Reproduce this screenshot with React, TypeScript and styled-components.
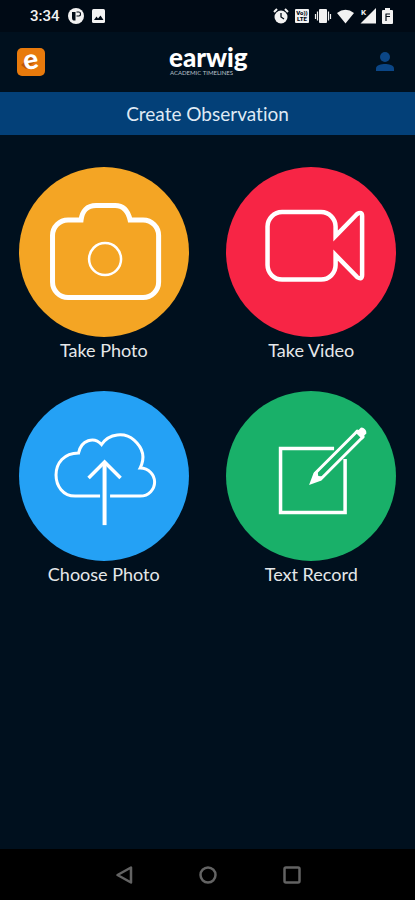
import React from "react";
import styled, { createGlobalStyle } from "styled-components";

const GlobalStyle = createGlobalStyle`
  *, *::before, *::after { box-sizing: border-box; }
  body { margin: 0; background: #00101e; }
  button { border: 0; padding: 0; background: none; color: inherit; font: inherit; cursor: pointer; }
  svg { display: block; overflow: visible; }
`;

const Screen = styled.div`
  min-height: 100vh;
  display: flex;
  flex-direction: column;
  background: #00101e;
  color: #e6e8ea;
  font-family: Lato, "Liberation Sans", sans-serif;
  font-variant-ligatures: none;
`;

const StatusBar = styled.div`
  height: 32px;
  padding: 0 22px 0 30px;
  display: flex;
  align-items: center;
  justify-content: space-between;
  background: #000a15;
  color: #f2f2f2;
`;

const StatusGroup = styled.div<{ $gap: number }>`
  display: flex;
  align-items: center;
  gap: ${(p) => p.$gap}px;
`;

const Clock = styled.time`
  font: 500 15px/20px Roboto, sans-serif;
`;

const Header = styled.header`
  height: 60px;
  padding: 0 18px 0 17px;
  display: grid;
  grid-template-columns: 1fr auto 1fr;
  align-items: center;
`;

const AppButton = styled.button`
  width: 28px;
  height: 28px;
`;

const AccountButton = styled.button`
  justify-self: end;
  color: #0b4686;
`;

const Banner = styled.h1`
  margin: 0;
  height: 43px;
  display: flex;
  align-items: center;
  justify-content: center;
  background: #034078;
  color: #dfe9f4;
  font-size: 19px;
  line-height: 24px;
  font-weight: 400;
`;

const Actions = styled.main`
  flex: 1;
  padding-top: 32px;
  display: grid;
  grid-template-columns: 1fr 1fr;
  align-content: start;
  row-gap: 28px;
`;

const Action = styled.button`
  display: flex;
  flex-direction: column;
  align-items: center;
`;

const Disc = styled.span<{ $color: string }>`
  width: 82%;
  aspect-ratio: 1;
  border-radius: 50%;
  background: ${(p) => p.$color};
  color: #fff;
  svg { width: 100%; height: 100%; }
`;

const Label = styled.span`
  font-size: 18px;
  line-height: 26px;
`;

const NavBar = styled.nav`
  height: 51px;
  display: flex;
  align-items: center;
  justify-content: center;
  gap: 64px;
  background: #000;
  color: #636363;
`;

const NavButton = styled.button`
  width: 20px;
  height: 20px;
`;

const CameraArt = () => (
  <svg viewBox="0 0 170 170" fill="none" stroke="currentColor" aria-hidden="true">
    <path
      strokeWidth="5"
      d="M49 53H62C63 44 68 38.500 77 38.500H96C105 38.500 109 44 111 53H124A15.500 15.500 0 0 1 139.500 68.500V115A15.500 15.500 0 0 1 124 130.500H49A15.500 15.500 0 0 1 33.500 115V68.500A15.500 15.500 0 0 1 49 53Z"
    />
    <circle cx="86" cy="92" r="16" strokeWidth="2.500" />
  </svg>
);

const VideoArt = () => (
  <svg viewBox="0 0 170 170" fill="none" stroke="currentColor" aria-hidden="true">
    <path
      strokeWidth="4.500"
      strokeMiterlimit="6"
      d="M56 45H95A14.500 14.500 0 0 1 109.500 59.500V69L131 47Q136 44 136 49V108Q136 113 131 110L109.500 88V98A14.500 14.500 0 0 1 95 112.500H56A14.500 14.500 0 0 1 41.500 98V59.500A14.500 14.500 0 0 1 56 45Z"
    />
  </svg>
);

const CloudArt = () => (
  <svg viewBox="0 0 170 170" fill="none" stroke="currentColor" aria-hidden="true">
    <path
      strokeWidth="3"
      d="M81 105H56C44 105 37 95 37 84C37 72 45 62 59.500 62C62 49 75 45 82.500 53.500C90 42 106 41 115 49C124 57 126 67 121 77C130 77 135.500 84 135.500 91C135.500 98 130 105 121 105H91"
    />
    <path strokeWidth="4" d="M85.500 134V71" />
    <path strokeWidth="3.500" d="M69.500 87L85.500 71L101.500 87" />
  </svg>
);

const RecordArt = () => (
  <svg viewBox="0 0 170 170" fill="none" stroke="currentColor" aria-hidden="true">
    <path strokeWidth="3.500" d="M108 57.500H54.500V121.500H119V68" />
    <g transform="translate(83 94) rotate(-45)">
      <path strokeWidth="3" strokeLinejoin="round" d="M13 -4H72V4H13L9 0Z" />
      <path fill="currentColor" stroke="none" d="M0 0L12 -5.500L16 -4L13 0L16 4L12 5.500Z" />
      <path fill="currentColor" stroke="none" d="M70 -5.500H73L74 -4H77Q79 -3 79 0Q79 3 77 4H74L73 5.500H70Z" />
    </g>
  </svg>
);

const actions = [
  { label: "Take Photo", color: "#f4a524", Art: CameraArt },
  { label: "Take Video", color: "#f72545", Art: VideoArt },
  { label: "Choose Photo", color: "#24a1f5", Art: CloudArt },
  { label: "Text Record", color: "#19b069", Art: RecordArt },
];

const brandFont = 'Lato, "Liberation Sans", sans-serif';

const Wordmark = () => (
  <svg width="76" height="34" viewBox="0 0 76 34" fill="#fff" role="img" aria-label="earwig academic timelines">
    <text x="0" y="22" fontFamily={brandFont} fontWeight="900" fontSize="26">earwig</text>
    <text x="1" y="30" fontFamily={brandFont} fontSize="6" fill="#b9c0c8">ACADEMIC TIMELINES</text>
  </svg>
);

const AppIcon = () => (
  <svg width="28" height="28" viewBox="0 0 28 28" aria-hidden="true">
    <rect width="28" height="28" rx="5" fill="#e87a0c" />
    <path d="M4 17L9 21L20 12L14 8Z" fill="#bd5908" />
    <text x="14" y="21" transform="rotate(-10 14 14)" textAnchor="middle" fontFamily={brandFont} fontWeight="900" fontSize="28" fill="#fff">e</text>
  </svg>
);

const StatusIcons = () => (
  <>
    <svg width="16" height="16" viewBox="0 0 16 16" fill="currentColor" aria-hidden="true">
      <circle cx="8" cy="9" r="6.500" />
      <path d="M1 4L4 1M15 4L12 1" stroke="currentColor" strokeWidth="2" />
      <path d="M8 5V9L11 11" fill="none" stroke="#000a15" strokeWidth="1.300" />
    </svg>
    <svg width="14" height="16" viewBox="0 0 14 16" aria-hidden="true">
      <rect y="1" width="14" height="14" rx="1" fill="currentColor" />
      <text x="7" y="7" textAnchor="middle" fontFamily="Roboto, sans-serif" fontWeight="900" fontSize="6" fill="#000a15">Vo))</text>
      <text x="7" y="13" textAnchor="middle" fontFamily="Roboto, sans-serif" fontWeight="900" fontSize="6" fill="#000a15">LTE</text>
    </svg>
    <svg width="16" height="16" viewBox="0 0 16 16" fill="currentColor" aria-hidden="true">
      <rect x="4" y="1" width="8" height="14" rx="1" />
      <path d="M2.500 3.500V12.500M13.500 3.500V12.500M0.500 6V11M15.500 6V11" stroke="currentColor" strokeWidth="1.200" />
    </svg>
    <svg width="17" height="16" viewBox="0 0 17 16" fill="currentColor" aria-hidden="true">
      <path d="M0 5Q8.500 -1.500 17 5L8.500 15.500Z" />
    </svg>
    <svg width="16" height="16" viewBox="0 0 16 16" fill="currentColor" aria-hidden="true">
      <path d="M16 0V15.500H0.500Z" />
      <text x="1" y="7" fontFamily="Roboto, sans-serif" fontWeight="700" fontSize="8">K</text>
    </svg>
    <svg width="11" height="16" viewBox="0 0 11 16" fill="currentColor" aria-hidden="true">
      <path d="M3 0H8V2H10Q11 2 11 3V15Q11 16 10 16H1Q0 16 0 15V3Q0 2 1 2H3Z" />
      <path d="M3.500 6H8M3.500 8.500H8M4 6V13" fill="none" stroke="#000a15" strokeWidth="1.200" />
    </svg>
  </>
);

export default function App() {
  return (
    <Screen>
      <GlobalStyle />
      <StatusBar>
        <StatusGroup $gap={8}>
          <Clock>3:34</Clock>
          <svg width="16" height="16" viewBox="0 0 16 16" aria-hidden="true">
            <circle cx="8" cy="8" r="8" fill="currentColor" />
            <path d="M4 4H7.500V12.500Q4 13 4 10Z" fill="#000a15" />
            <path d="M8.500 4H11Q12.500 4 12.500 6Q12.500 8 11 8H8.500" fill="none" stroke="#000a15" strokeWidth="1.200" />
          </svg>
          <svg width="13" height="14" viewBox="0 0 13 14" aria-hidden="true">
            <rect width="13" height="14" rx="1.500" fill="currentColor" />
            <path d="M2 11L4.500 7.500L6 9.500L8.500 6.500L11.500 11Z" fill="#000a15" />
          </svg>
        </StatusGroup>
        <StatusGroup $gap={6}>
          <StatusIcons />
        </StatusGroup>
      </StatusBar>
      <Header>
        <AppButton aria-label="Home">
          <AppIcon />
        </AppButton>
        <Wordmark />
        <AccountButton aria-label="Account">
          <svg width="24" height="24" viewBox="0 0 24 24" fill="currentColor" aria-hidden="true">
            <circle cx="12" cy="7" r="5" />
            <path d="M3 21V18.500C3 15 8.500 14 12 14S21 15 21 18.500V21Z" />
          </svg>
        </AccountButton>
      </Header>
      <Banner>Create Observation</Banner>
      <Actions>
        {actions.map(({ label, color, Art }) => (
          <Action key={label}>
            <Disc $color={color}>
              <Art />
            </Disc>
            <Label>{label}</Label>
          </Action>
        ))}
      </Actions>
      <NavBar aria-label="System">
        <NavButton aria-label="Back">
          <svg viewBox="0 0 20 20" fill="none" stroke="currentColor" strokeWidth="2.500" strokeLinejoin="round" aria-hidden="true">
            <path d="M17 2.500V17.500L3.500 10Z" />
          </svg>
        </NavButton>
        <NavButton aria-label="Home screen">
          <svg viewBox="0 0 20 20" fill="none" stroke="currentColor" strokeWidth="2.500" aria-hidden="true">
            <circle cx="10" cy="10" r="7.500" />
          </svg>
        </NavButton>
        <NavButton aria-label="Recent apps">
          <svg viewBox="0 0 20 20" fill="none" stroke="currentColor" strokeWidth="2.500" aria-hidden="true">
            <rect x="2.500" y="2.500" width="15" height="15" rx="1.500" />
          </svg>
        </NavButton>
      </NavBar>
    </Screen>
  );
}
